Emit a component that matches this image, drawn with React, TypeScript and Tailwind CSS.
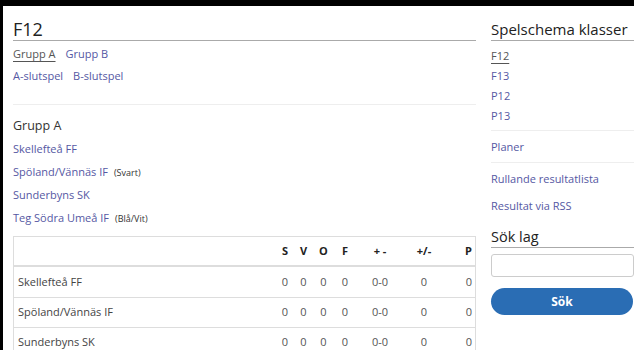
import React from "react";

const link = "text-[#5558a3]";

const teams: { name: string; note?: string }[] = [
  { name: "Skellefteå FF" },
  { name: "Spöland/Vännäs IF", note: "(Svart)" },
  { name: "Sunderbyns SK" },
  { name: "Teg Södra Umeå IF", note: "(Blå/Vit)" },
];

const rows = ["Skellefteå FF", "Spöland/Vännäs IF", "Sunderbyns SK"];

function Cells({ vals, bold }: { vals: string[]; bold?: boolean }) {
  const w = ["w-[20px]", "w-[17px]", "w-[23px]", "w-[20px]", "w-[50px]", "w-[38px]"];
  const c = bold ? "font-bold text-[#222]" : "text-[#555]";
  return (
    <>
      {vals.slice(0, 6).map((v, i) => (
        <div key={i} className={`${w[i]} text-center ${c}`}>
          {v}
        </div>
      ))}
      <div className={`w-[32px] text-right pr-[3px] ${c}`}>{vals[6]}</div>
    </>
  );
}

export default function App() {
  return (
    <div className="w-[634px] h-[350px] overflow-hidden bg-white border-t-[6px] border-l-[3px] border-black font-['Open_Sans',sans-serif] text-[#333]">
      <div className="flex gap-[15px] pl-[10px]">
        {/* Left column */}
        <div className="w-[463px] shrink-0">
          <div className="mt-[12px] text-[18px] leading-[22px] border-b border-[#aaa] text-[#222]">F12</div>
          <div className="mt-[3px] flex gap-[10px] text-[11px] leading-[20px]">
            <span className="text-[#555] underline underline-offset-[3px]">Grupp A</span>
            <span className={link}>Grupp B</span>
          </div>
          <div className="mt-[2px] flex gap-[10px] text-[11px] leading-[20px] pb-[18px] border-b border-[#eee]">
            <span className={link}>A-slutspel</span>
            <span className={link}>B-slutspel</span>
          </div>
          <div className="mt-[11px] text-[12.5px] leading-[20px] text-[#333]">Grupp A</div>
          <div className="mt-[2px] flex flex-col">
            {teams.map((t) => (
              <div key={t.name} className="h-[23px] flex items-center text-[11px]">
                <span className={link}>{t.name}</span>
                {t.note && <span className="ml-[6px] text-[9px] text-[#333]">{t.note}</span>}
              </div>
            ))}
          </div>
          <div className="mt-[6px] border border-[#ddd] text-[11px]">
            <div className="h-[30px] flex items-center border-b-2 border-[#ddd]">
              <div className="flex-1" />
              <Cells vals={["S", "V", "O", "F", "+ -", "+/-", "P"]} bold />
            </div>
            {rows.map((r, i) => (
              <div key={r} className={`h-[30px] flex items-center ${i > 0 ? "border-t border-[#ddd]" : ""}`}>
                <div className="flex-1 pl-[4px] text-[11px] text-[#444]">{r}</div>
                <Cells vals={["0", "0", "0", "0", "0-0", "0", "0"]} />
              </div>
            ))}
          </div>
        </div>

        {/* Right column */}
        <div className="w-[150px] shrink-0">
          <div className="mt-[12px] text-[15px] leading-[22px] border-b border-[#aaa] text-[#222] whitespace-nowrap">
            Spelschema klasser
          </div>
          <div className="mt-[5px] flex flex-col text-[11px] leading-[20px] pb-[4px] border-b border-[#eee]">
            <span className="text-[#555] underline underline-offset-[3px]">F12</span>
            <span className={link}>F13</span>
            <span className={link}>P12</span>
            <span className={link}>P13</span>
          </div>
          <div className={`mt-[6px] text-[11px] leading-[20px] pb-[5px] border-b border-[#eee] ${link}`}>Planer</div>
          <div className={`mt-[6px] text-[11px] leading-[20px] ${link}`}>Rullande resultatlista</div>
          <div className={`mt-[7px] text-[11px] leading-[20px] ${link}`}>Resultat via RSS</div>
          <div className="mt-[10px] text-[14.5px] leading-[21px] border-b border-[#aaa] text-[#222]">Sök lag</div>
          <div className="mt-[6px] h-[23px] w-[143px] border border-[#ccc] rounded-[3px]" />
          <div className="mt-[11px] h-[27px] w-[142px] rounded-full bg-[#2a6db4] text-white font-bold text-[12px] flex items-center justify-center">
            Sök
          </div>
        </div>
      </div>
    </div>
  );
}
